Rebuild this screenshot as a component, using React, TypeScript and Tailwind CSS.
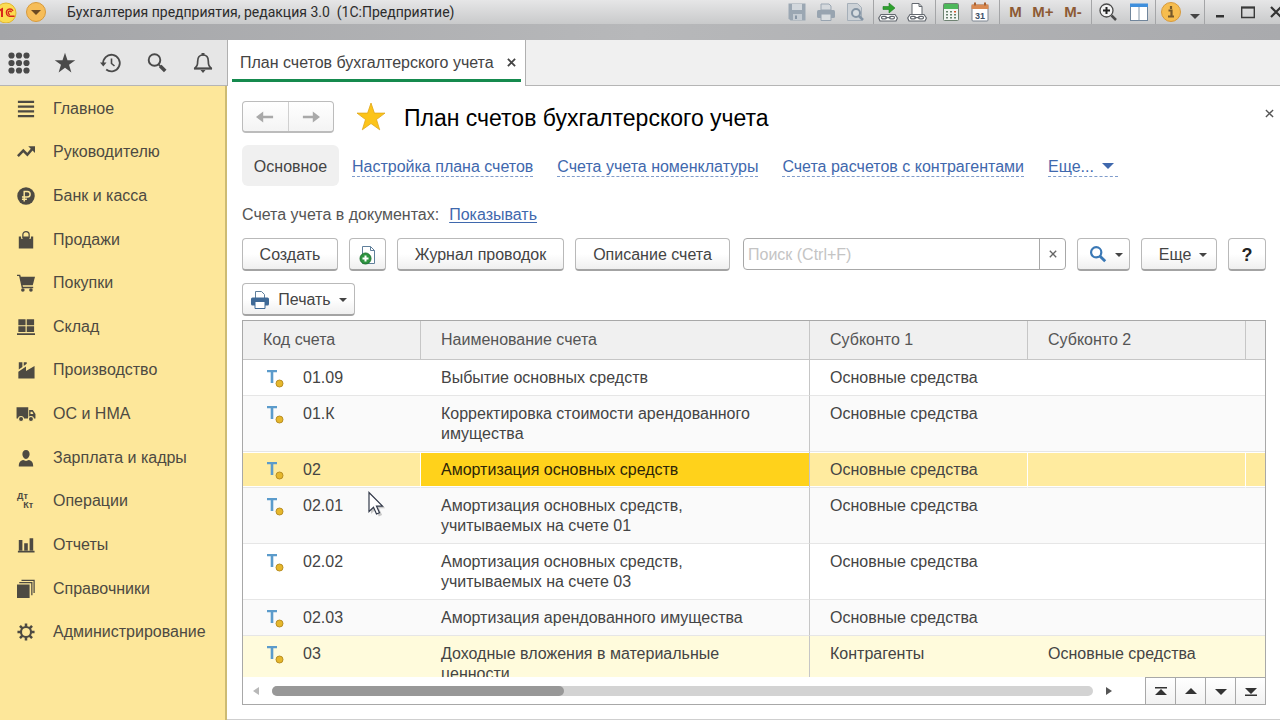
import React from "react";
import clsx from "clsx";

interface SvgProps {
  size?: number;
  box?: number;
  className?: string;
  children: React.ReactNode;
}

const Svg: React.FC<SvgProps> = ({ size = 20, box = 20, className, children }) => (
  <svg
    width={size}
    height={size}
    viewBox={`0 0 ${box} ${box}`}
    fill="none"
    aria-hidden="true"
    className={clsx("shrink-0 overflow-visible", className)}
  >
    {children}
  </svg>
);

const CaretDown = () => (
  <svg width="8" height="4" viewBox="0 0 8 4" fill="currentColor" aria-hidden="true" className="shrink-0">
    <path d="M0 0h8L4 4z" />
  </svg>
);

const starPath = "M15 1l3.4 10.1H29l-8.500 6.400 3.200 10.300L15 21.500l-8.700 6.300 3.200-10.300L1 11.100h10.600z";

/* ---------- Window title bar ---------- */

interface TitleGroupProps {
  className: string;
  children: React.ReactNode;
}

const TitleGroup: React.FC<TitleGroupProps> = ({ className, children }) => (
  <div className={clsx("flex h-6 shrink-0 items-center justify-around", className)}>{children}</div>
);

const separator = "border-l border-[#a4a5a7]";

const ToolButton: React.FC<{ label: string; children: React.ReactNode }> = ({ label, children }) => (
  <button type="button" aria-label={label} className="flex h-6 items-center justify-center">
    {children}
  </button>
);

const MemoryButton: React.FC<{ text: string }> = ({ text }) => (
  <button type="button" className="text-[15px] leading-6 font-bold text-[#8d5a34]">
    {text}
  </button>
);

const ChainLinks = () => (
  <g stroke="#63686f" strokeWidth="1.200" fill="#fff">
    <path d="M3 12.500h14l2.400 3.500-1.400 3H2L.7 16z" />
    <rect x="3.500" y="14.300" width="5" height="2.600" rx="1.300" />
    <rect x="11.500" y="14.300" width="5" height="2.600" rx="1.300" />
    <path d="M7.500 15.600h5" />
  </g>
);

const TitleBar = () => (
  <header className="h-10 overflow-hidden bg-linear-to-r from-[#a4a5a8] via-[#b7b8ba] to-[#a9aaad]">
    <div className="flex h-6 items-center bg-linear-to-b from-[#e6e6e7] to-[#c9cacb]">
      <svg width="17" height="22" viewBox="0 0 17 22" aria-hidden="true" className="shrink-0">
        <circle cx="6" cy="12" r="10" fill="#fbdc52" stroke="#e3b62f" />
        <path d="M0 9.500l2-1.200V16" stroke="#d8261c" strokeWidth="2" fill="none" />
        <path d="M13 9.800a3.600 3.600 0 1 0-3.400 5.400h5M11.500 11.200a1.700 1.700 0 1 0-1.600 2.300" stroke="#d8261c" strokeWidth="1.400" fill="none" />
      </svg>
      <button type="button" aria-label="Главное меню" className="ml-2 shrink-0">
        <svg width="22" height="22" viewBox="0 0 22 22" aria-hidden="true">
          <circle cx="11" cy="11" r="9.500" fill="#f6bd59" stroke="#d79a3c" />
          <path d="M6 9h10l-5 5z" fill="#6b4a22" />
        </svg>
      </button>
      <h1 className="ml-5 flex-1 truncate font-[Roboto,Arial,sans-serif] text-[14px] leading-6 text-[#2c2c2c]">
        Бухгалтерия предприятия, редакция 3.0&nbsp; (1С:Предприятие)
      </h1>

      <TitleGroup className="w-[90px] pr-1">
        <ToolButton label="Сохранить">
          <Svg>
            <path d="M1.500 1.500h17v17h-15l-2-2z" fill="#9ba7b3" />
            <path d="M5 2h10v6H5z" fill="#d3d8dd" />
            <path d="M6 12h9v6H6z" fill="#c5ccd3" />
            <path d="M8 13.500h2v3.500H8z" fill="#8896a5" />
          </Svg>
        </ToolButton>
        <ToolButton label="Печать">
          <Svg>
            <path d="M5 2h8l2 2v4H5z" fill="#d5d9dd" stroke="#9ba7b3" />
            <rect x="1" y="8" width="18" height="8" rx="1.500" fill="#98a4b0" />
            <path d="M5 12h10v6.500H5z" fill="#d9dde0" stroke="#98a4b0" />
          </Svg>
        </ToolButton>
        <ToolButton label="Предварительный просмотр">
          <Svg>
            <path d="M2.500 1.500h10l4 4v13h-14z" fill="#cdd2d7" stroke="#a5afb9" />
            <circle cx="11" cy="11" r="4" stroke="#8494a4" strokeWidth="2" fill="#d8dde1" />
            <path d="M14 14l4 4" stroke="#8494a4" strokeWidth="2.500" />
          </Svg>
        </ToolButton>
      </TitleGroup>

      <TitleGroup className={clsx("w-[62px] pr-1", separator)}>
        <ToolButton label="Получить ссылку">
          <Svg>
            <ChainLinks />
            <path d="M5 4.500h6V1l6 5-6 5V7.500H5z" fill="#2ea12e" stroke="#1d7c22" strokeWidth=".6" />
          </Svg>
        </ToolButton>
        <ToolButton label="Перейти по ссылке">
          <Svg>
            <path d="M5 13V1.500h7l3 3V13z" fill="#fff" stroke="#63686f" />
            <path d="M12 1.500v3h3" stroke="#63686f" />
            <ChainLinks />
          </Svg>
        </ToolButton>
      </TitleGroup>

      <TitleGroup className={clsx("w-[64px] pr-1", separator)}>
        <ToolButton label="Калькулятор">
          <Svg>
            <rect x="2.500" y="1.500" width="15" height="17" rx="1" fill="#f2f5f2" stroke="#6f8272" />
            <path d="M3 2h14v5H3z" fill="#4db85a" />
            <g fill="#67806c">
              <path d="M5 9h2v1.500H5zM9 9h2v1.500H9zM5 12h2v1.500H5zM9 12h2v1.500H9zM5 15h2v1.500H5zM9 15h2v1.500H9zM13 12h2v1.500h-2zM13 15h2v1.500h-2z" />
            </g>
            <path d="M13 9h2v1.500h-2z" fill="#d8542e" />
          </Svg>
        </ToolButton>
        <ToolButton label="Календарь">
          <Svg>
            <rect x="2" y="3" width="16" height="16" rx="1" fill="#fff" stroke="#7c8590" />
            <path d="M1.500 2.500h17V7h-17z" fill="#d98a52" />
            <path d="M5 .5v3M15 .5v3" stroke="#a9602f" strokeWidth="2" />
            <text x="10" y="16.500" textAnchor="middle" fontSize="9" fontWeight="bold" fill="#3d5168">
              31
            </text>
          </Svg>
        </ToolButton>
      </TitleGroup>

      <TitleGroup className={clsx("w-[92px] px-1", separator)}>
        <MemoryButton text="M" />
        <MemoryButton text="M+" />
        <MemoryButton text="M-" />
      </TitleGroup>

      <TitleGroup className={clsx("w-[64px]", separator)}>
        <ToolButton label="Масштаб">
          <Svg>
            <circle cx="8.500" cy="8.500" r="6.500" fill="#f3f3f3" stroke="#4b4b4b" strokeWidth="1.300" />
            <path d="M8.500 5v7M5 8.500h7" stroke="#222" strokeWidth="2" />
            <path d="M13.500 13.500l4.500 4.500" stroke="#4b4b4b" strokeWidth="2.500" />
          </Svg>
        </ToolButton>
        <ToolButton label="Панели">
          <Svg>
            <rect x="1.500" y="2.500" width="17" height="16" fill="#fff" stroke="#70859b" />
            <path d="M1 1.500h18V5H1z" fill="#3f8fdc" />
            <path d="M10 5v13.500" stroke="#8496a8" />
          </Svg>
        </ToolButton>
      </TitleGroup>

      <TitleGroup className={clsx("w-[49px]", separator)}>
        <ToolButton label="Информация">
          <Svg size={22} box={22}>
            <circle cx="11" cy="11" r="9.500" fill="#f6bd4f" stroke="#d79a3c" />
            <path d="M11 5v3M8.500 9.500h3V15M8 15.500h6" stroke="#76592b" strokeWidth="2.200" />
          </Svg>
        </ToolButton>
        <button type="button" aria-label="Ещё" className="mt-2 text-[#444]">
          <svg width="10" height="5" viewBox="0 0 10 5" fill="currentColor" aria-hidden="true">
            <path d="M0 0h10L5 5z" />
          </svg>
        </button>
      </TitleGroup>

      <div className={clsx("flex h-6 w-[76px] shrink-0 items-center justify-between pl-[10px]", separator)}>
        <ToolButton label="Свернуть">
          <svg width="10" height="14" viewBox="0 0 10 14" aria-hidden="true">
            <path d="M1 10h8v2.500H1z" fill="#333" />
          </svg>
        </ToolButton>
        <ToolButton label="Развернуть">
          <svg width="14" height="14" viewBox="0 0 14 14" fill="none" aria-hidden="true">
            <path d="M.7 2.500h12.600v10H.7z" stroke="#3a3a3a" strokeWidth="1.400" />
            <path d="M0 2.500h14" stroke="#3a3a3a" strokeWidth="2" />
          </svg>
        </ToolButton>
        <ToolButton label="Закрыть">
          <svg width="10" height="12" viewBox="0 0 10 12" fill="none" aria-hidden="true">
            <path d="M1 1l10 10M11 1L1 11" stroke="#333" strokeWidth="2.200" />
          </svg>
        </ToolButton>
      </div>
    </div>
  </header>
);

/* ---------- Toolbar with the open tab ---------- */

const TabBar = () => (
  <div className="flex h-[46px] items-stretch border-b border-[#b5b5b5] bg-[#f0f0f0]">
    <div className="flex w-[227px] shrink-0 items-center gap-6 bg-[#e6e6e6] pl-2 text-[#4a4a4a]">
      <button type="button" aria-label="Меню функций">
        <Svg size={22} box={22}>
          {[3.5, 11, 18.5].map((y) =>
            [3.5, 11, 18.5].map((x) => <circle key={`${x}-${y}`} cx={x} cy={y} r="3.100" fill="currentColor" />),
          )}
        </Svg>
      </button>
      <button type="button" aria-label="Избранное">
        <Svg size={22} box={30}>
          <path d={starPath} fill="currentColor" />
        </Svg>
      </button>
      <button type="button" aria-label="История">
        <Svg size={22} box={22}>
          <path d="M3.200 12a8.300 8.300 0 1 1 3 5.500" stroke="currentColor" strokeWidth="1.800" />
          <path d="M0 10.500h6.500L3.300 14.500z" fill="currentColor" />
          <path d="M11.500 6.500v5l3 2.500" stroke="currentColor" strokeWidth="1.600" />
        </Svg>
      </button>
      <button type="button" aria-label="Поиск">
        <Svg size={22} box={22}>
          <circle cx="8.500" cy="8" r="5.800" stroke="currentColor" strokeWidth="1.900" />
          <path d="M12.500 12.300l2 2" stroke="currentColor" strokeWidth="1.700" />
          <path d="M14.200 14l5 5" stroke="currentColor" strokeWidth="3.600" />
        </Svg>
      </button>
      <button type="button" aria-label="Уведомления">
        <Svg size={22} box={22}>
          <path
            d="M11 3c-3.800 0-5.300 2.600-5.300 6 0 4.500-1 5.500-3 7.500h16.600c-2-2-3-3-3-7.500 0-3.400-1.500-6-5.300-6z"
            stroke="currentColor"
            strokeWidth="1.700"
            strokeLinejoin="round"
          />
          <path d="M9.500 1h3v2.500h-3zM2 15.500h18v2H2zM8.500 18h5l-2.500 3z" fill="currentColor" />
        </Svg>
      </button>
    </div>
    <div className="-mb-px flex w-[299px] shrink-0 flex-col border-x border-[#b0b0b0] bg-white px-1 pb-1">
      <div className="flex flex-1 items-center justify-between border-b-3 border-[#158a4e] pt-1.5 pr-1 pl-2">
        <a href="#accounts" className="text-[16px] leading-5 whitespace-nowrap text-[#444]">
          План счетов бухгалтерского учета
        </a>
        <button type="button" aria-label="Закрыть вкладку" className="px-px text-[#444]">
          <Svg size={9} box={10}>
            <path d="M1 1l8 8M9 1L1 9" stroke="currentColor" strokeWidth="2" />
          </Svg>
        </button>
      </div>
    </div>
  </div>
);

/* ---------- Sections panel ---------- */

const sections: { title: string; icon: React.ReactNode }[] = [
  {
    title: "Главное",
    icon: <path d="M1 2h18M1 7.300h18M1 12.700h18M1 18h18" stroke="currentColor" strokeWidth="2.400" />,
  },
  {
    title: "Руководителю",
    icon: (
      <>
        <path d="M1 14.500l6-6 4.500 4.500 6-7" stroke="currentColor" strokeWidth="2.800" />
        <path d="M12.500 3.500H20V11z" fill="currentColor" />
      </>
    ),
  },
  {
    title: "Банк и касса",
    icon: (
      <>
        <circle cx="10" cy="10" r="9.700" fill="currentColor" />
        <path d="M8 16V5h3.500a3 3 0 0 1 0 6.200H5.500M5.500 13.700H11" stroke="#fde79a" strokeWidth="1.600" />
      </>
    ),
  },
  {
    title: "Продажи",
    icon: (
      <>
        <path d="M2 6h2.500v2.500h2V6h7v2.500h2V6H18v13.500H2z" fill="currentColor" />
        <path d="M6.500 8V4.200a3.500 3.500 0 0 1 7 0V8" stroke="currentColor" strokeWidth="1.400" />
      </>
    ),
  },
  {
    title: "Покупки",
    icon: (
      <>
        <path d="M3.500 3H20l-2.500 9.500H5.500z" fill="currentColor" />
        <path d="M0 1.500h3l3 13.500h12" stroke="currentColor" strokeWidth="1.600" />
        <circle cx="6.500" cy="17.700" r="2" fill="currentColor" />
        <circle cx="15.500" cy="17.700" r="2" fill="currentColor" />
      </>
    ),
  },
  {
    title: "Склад",
    icon: <path d="M1.500 1.500H9.500v6.500H1.500zM10.800 1.500h8.200v6.500h-8.200zM1.500 9.200H9.500v6.300H1.500zM10.800 9.200h8.200v6.300h-8.200zM0 17h20v2H0z" fill="currentColor" />,
  },
  {
    title: "Производство",
    icon: <path d="M1.500 19.500V12l8.500-6v5l9.500-5.500v14zM2 1.500h4v5.200L2 9.500zM7.500 1.500h3.300v1.500L7.500 5.500z" fill="currentColor" />,
  },
  {
    title: "ОС и НМА",
    icon: (
      <>
        <path d="M-.5 2.500h13v12.500h-13zM13.500 5.500h4l3 4.500v5h-7z" fill="currentColor" />
        <path d="M15 7.500h2l1.300 2.500H15z" fill="#fde79a" />
        <circle cx="4.500" cy="15.500" r="2.800" fill="currentColor" stroke="#fde79a" strokeWidth="1.200" />
        <circle cx="15.500" cy="15.500" r="2.800" fill="currentColor" stroke="#fde79a" strokeWidth="1.200" />
      </>
    ),
  },
  {
    title: "Зарплата и кадры",
    icon: <path d="M10 1c2.600 0 4 2 4 4.600S12.300 11 10 11 6 8.200 6 5.600 7.400 1 10 1zM2 19.500c0-4.500 1.500-6.500 5-7.200 1.800 1.200 4.200 1.200 6 0 3.500.7 5 2.700 5 7.200z" fill="currentColor" />,
  },
  {
    title: "Операции",
    icon: (
      <g fill="currentColor" fontSize="10" fontWeight="bold">
        <text x="0" y="8">Дт</text>
        <text x="7" y="18">Кт</text>
      </g>
    ),
  },
  {
    title: "Отчеты",
    icon: <path d="M2 4.500h4V16H2zM8 8h4v8H8zM14 2.500h4V16h-4zM1 16.500h18.500v1.800H1z" fill="currentColor" />,
  },
  {
    title: "Справочники",
    icon: (
      <>
        <path d="M0 5h14v15H0z" fill="currentColor" />
        <path d="M2.500 2.800h14V17M5 .3h14v14.200" stroke="currentColor" strokeWidth="1.400" />
      </>
    ),
  },
  {
    title: "Администрирование",
    icon: (
      <>
        <circle cx="10" cy="10" r="5.600" stroke="currentColor" strokeWidth="2.400" />
        <path
          d="M10 .5v4M10 15.500v4M.5 10h4M15.500 10h4M3.300 3.300l2.800 2.800M13.900 13.900l2.800 2.800M3.300 16.700l2.800-2.800M13.900 6.100l2.800-2.800"
          stroke="currentColor"
          strokeWidth="2.800"
        />
      </>
    ),
  },
];

const Sidebar = () => (
  <nav aria-label="Разделы" className="w-[227px] shrink-0 border-r-2 border-[#cdbb73] bg-[#fde79a]">
    <ul className="mt-px flex h-[567px] flex-col">
      {sections.map(({ title, icon }) => (
        <li key={title} className="flex-1">
          <a href="#section" className="flex h-full items-center gap-[18px] pl-[17px] text-[#4d4a42]">
            <Svg size={18}>{icon}</Svg>
            <span className="text-[16px] leading-5">{title}</span>
          </a>
        </li>
      ))}
    </ul>
  </nav>
);

/* ---------- Form commands ---------- */

interface CommandButtonProps {
  className?: string;
  label?: string;
  children: React.ReactNode;
}

const CommandButton: React.FC<CommandButtonProps> = ({ className, label, children }) => (
  <button
    type="button"
    aria-label={label}
    className={clsx(
      "flex h-[33px] shrink-0 items-center justify-center rounded-sm border border-b-2 border-[#b9b9b9] border-b-[#a3a3a3] bg-linear-to-b from-white from-50% to-[#efefef] pt-0.5 text-[16px] leading-5 whitespace-nowrap text-[#444]",
      className,
    )}
  >
    {children}
  </button>
);

const PageHeader = () => (
  <div className="flex h-8 items-center">
    <div className="flex h-8 w-[92px] shrink-0 rounded-sm border border-b-2 border-[#bcbcbc] bg-linear-to-b from-white to-[#f4f4f4] text-[#a9a9a9]">
      <button type="button" aria-label="Назад" className="flex flex-1 items-center justify-center border-r border-[#d0d0d0]">
        <Svg size={18}>
          <path d="M0 10l8-6v4.500h11v3H8V16z" fill="currentColor" />
        </Svg>
      </button>
      <button type="button" aria-label="Вперед" className="flex flex-1 items-center justify-center">
        <Svg size={18}>
          <path d="M20 10l-8-6v4.500H1v3h11V16z" fill="currentColor" />
        </Svg>
      </button>
    </div>
    <button type="button" aria-label="В избранное" className="ml-[22px] shrink-0">
      <Svg size={30} box={30}>
        <path d={starPath} fill="#fcc419" stroke="#e0a71b" strokeWidth=".8" />
      </Svg>
    </button>
    <h2 className="ml-[18px] flex-1 pt-0.5 text-[23px] leading-8 text-black">План счетов бухгалтерского учета</h2>
    <button type="button" aria-label="Закрыть форму" className="-mt-2 -mr-2 text-[#555]">
      <Svg size={9} box={10}>
        <path d="M1 1l8 8M9 1L1 9" stroke="currentColor" strokeWidth="1.500" />
      </Svg>
    </button>
  </div>
);

const formLinks = ["Настройка плана счетов", "Счета учета номенклатуры", "Счета расчетов с контрагентами"];

const FormNav = () => (
  <nav aria-label="Навигация формы" className="mt-3 flex h-[41px] items-center text-[16px] leading-5 whitespace-nowrap">
    <a href="#main" className="flex h-full w-[97px] items-center justify-center rounded-md bg-[#f0f0f0] pt-0.5 text-[#444]">
      Основное
    </a>
    <div className="ml-[13px] flex gap-6 pt-0.5 text-[#3f68ad]">
      {formLinks.map((text) => (
        <a key={text} href="#list" className="h-5 border-b border-dashed border-[#7f9ccb]">
          {text}
        </a>
      ))}
      <button type="button" className="flex h-5 items-start gap-2 border-b border-dashed border-[#7f9ccb] pr-1">
        Еще...
        <svg width="12" height="20" viewBox="0 0 12 20" fill="currentColor" aria-hidden="true">
          <path d="M0 6h12L6 12z" />
        </svg>
      </button>
    </div>
  </nav>
);

const CommandBar = () => (
  <div className="mt-[13px] flex gap-[11px]">
    <CommandButton className="w-24">Создать</CommandButton>
    <CommandButton className="w-[37px]" label="Добавить из плана">
      <Svg>
        <path d="M4.500 1.500h8l4 4v13h-12z" fill="#fff" stroke="#5f7f9b" />
        <path d="M12.500 1.500v4h4" stroke="#5f7f9b" />
        <circle cx="7.500" cy="13.500" r="5.500" fill="#2e9440" stroke="#1d7430" />
        <path d="M7.500 10.500v6M4.500 13.500h6" stroke="#fff" strokeWidth="2" />
      </Svg>
    </CommandButton>
    <CommandButton className="w-[167px]">Журнал проводок</CommandButton>
    <CommandButton className="w-[155px]">Описание счета</CommandButton>
    <div className="ml-0.5 flex h-8 min-w-0 flex-1 overflow-hidden rounded-sm border border-[#a8a8a8] bg-white">
      <input
        type="text"
        aria-label="Поиск"
        placeholder="Поиск (Ctrl+F)"
        className="min-w-0 flex-1 px-1 pt-0.5 text-[16px] leading-5 text-[#444] outline-none placeholder:text-[#c4c4c4]"
      />
      <button
        type="button"
        aria-label="Очистить"
        className="flex w-[26px] items-center justify-center border-l border-[#a8a8a8] text-[#666]"
      >
        <Svg size={8} box={10}>
          <path d="M1 1l8 8M9 1L1 9" stroke="currentColor" strokeWidth="1.700" />
        </Svg>
      </button>
    </div>
    <CommandButton className="w-[53px] gap-2 pl-1" label="Найти">
      <Svg size={18} className="text-[#3a78b5]">
        <circle cx="8" cy="7" r="5.700" stroke="currentColor" strokeWidth="2.400" />
        <path d="M12 11l6 6" stroke="currentColor" strokeWidth="3.200" />
      </Svg>
      <CaretDown />
    </CommandButton>
    <CommandButton className="w-[76px] gap-2 pl-2">
      Еще
      <CaretDown />
    </CommandButton>
    <CommandButton className="w-[38px]">
      <span className="text-[18px] font-bold text-[#222]">?</span>
    </CommandButton>
  </div>
);

/* ---------- Accounts table ---------- */

interface Account {
  code: string;
  name: string;
  sub1: string;
  sub2?: string;
  selected?: boolean;
  group?: boolean;
}

const accounts: Account[] = [
  { code: "01.09", name: "Выбытие основных средств", sub1: "Основные средства" },
  { code: "01.К", name: "Корректировка стоимости арендованного имущества", sub1: "Основные средства" },
  { code: "02", name: "Амортизация основных средств", sub1: "Основные средства", selected: true },
  { code: "02.01", name: "Амортизация основных средств, учитываемых на счете 01", sub1: "Основные средства" },
  { code: "02.02", name: "Амортизация основных средств, учитываемых на счете 03", sub1: "Основные средства" },
  { code: "02.03", name: "Амортизация арендованного имущества", sub1: "Основные средства" },
  {
    code: "03",
    name: "Доходные вложения в материальные ценности",
    sub1: "Контрагенты",
    sub2: "Основные средства",
    group: true,
  },
];

const AccountIcon = () => (
  <Svg size={18} box={18}>
    <path d="M0 1h10v2.200H6.300V14H3.700V3.200H0z" fill="#5b9bcb" />
    <circle cx="12.500" cy="14.500" r="3.500" fill="#e6b72c" stroke="#b98e22" />
  </Svg>
);

const headCell = "h-[39px] border-b border-[#c6c6c6] pl-5 text-left font-normal text-[#555]";

const AccountRow: React.FC<{ account: Account; striped: boolean }> = ({ account, striped }) => {
  const { code, name, sub1, sub2, selected, group } = account;
  const cell = clsx(
    "border-b border-[#e6e6e6] pt-2 pb-[7px] pl-5",
    selected && "shadow-[inset_0_1px_#fff,inset_0_-1px_#fff]",
  );
  const divider = selected ? "border-r border-r-white" : "";

  return (
    <tr
      className={clsx(
        "align-top text-[#444]",
        selected && "bg-[#ffeb9f]",
        group && "bg-[#fffbdc]",
        !selected && !group && (striped ? "bg-[#fafafa]" : "bg-white"),
      )}
    >
      <td className={clsx(cell, divider)}>
        <div className="flex items-center gap-[18px] pl-1">
          <AccountIcon />
          {code}
        </div>
      </td>
      <td className={clsx(cell, "border-r border-r-[#c6c6c6] pr-8", selected && "bg-[#ffd21b] text-[#2d2508]")}>
        {name}
      </td>
      <td className={clsx(cell, divider)}>{sub1}</td>
      <td className={clsx(cell, divider)}>{sub2}</td>
      <td className={cell} />
    </tr>
  );
};

const scrollSteps = [
  { label: "В начало", path: "M0 0h12v1.500H0zM6 2l6 6H0z" },
  { label: "Вверх", path: "M6 1l6 6H0z" },
  { label: "Вниз", path: "M6 8l6-6H0z" },
  { label: "В конец", path: "M6 7l6-6H0zM0 7.500h12V9H0z" },
];

const AccountsTable = () => (
  <section className="mt-1 flex min-h-0 flex-1 flex-col border border-[#a8a8a8] bg-white">
    <div className="min-h-0 flex-1 overflow-hidden">
      <table className="w-full table-fixed border-separate border-spacing-0 text-[16px] leading-5">
        <colgroup>
          <col className="w-[178px]" />
          <col />
          <col className="w-[218px]" />
          <col className="w-[218px]" />
          <col className="w-[19px]" />
        </colgroup>
        <thead className="bg-[#f0f0f0]">
          <tr>
            <th scope="col" className={clsx(headCell, "border-r")}>Код счета</th>
            <th scope="col" className={clsx(headCell, "border-r")}>Наименование счета</th>
            <th scope="col" className={clsx(headCell, "border-r")}>Субконто 1</th>
            <th scope="col" className={clsx(headCell, "border-r")}>Субконто 2</th>
            <td className="border-b border-[#c6c6c6]" />
          </tr>
        </thead>
        <tbody>
          {accounts.map((account, index) => (
            <AccountRow key={account.code} account={account} striped={index % 2 === 1} />
          ))}
        </tbody>
      </table>
    </div>
    <div className="flex h-[27px] shrink-0 items-center pl-[10px]">
      <button type="button" aria-label="Влево" className="text-[#b8b8b8]">
        <svg width="6" height="8" viewBox="0 0 6 8" fill="currentColor" aria-hidden="true">
          <path d="M6 0v8L0 4z" />
        </svg>
      </button>
      <div className="mx-[13px] h-[10px] flex-1 rounded-full bg-[#d3d3d3]">
        <div className="h-[10px] w-[292px] rounded-full bg-[#989898]" />
      </div>
      <button type="button" aria-label="Вправо" className="text-[#555]">
        <svg width="6" height="8" viewBox="0 0 6 8" fill="currentColor" aria-hidden="true">
          <path d="M0 0v8l6-4z" />
        </svg>
      </button>
      <div className="ml-[33px] flex h-full border-t border-[#a8a8a8]">
        {scrollSteps.map(({ label, path }) => (
          <button
            key={label}
            type="button"
            aria-label={label}
            className="flex w-[30px] items-center justify-center border-l border-[#a8a8a8] bg-linear-to-b from-white to-[#f2f2f2] text-[#333]"
          >
            <svg width="12" height="9" viewBox="0 0 12 9" fill="currentColor" aria-hidden="true">
              <path d={path} />
            </svg>
          </button>
        ))}
      </div>
    </div>
  </section>
);

const MousePointer = () => (
  <svg width="20" height="28" viewBox="0 0 20 28" aria-hidden="true" className="pointer-events-none absolute top-[491px] left-[367px]">
    <path d="M4 3v20l4.600-4.400 3.200 7 3.300-1.500-3.100-6.900h6.200z" fill="#000" opacity=".2" />
    <path d="M2 1.500v19l4.500-4.200 3 6.700 3-1.300-3-6.500h6z" fill="#fff" stroke="#333a4a" strokeWidth="1.200" />
  </svg>
);

const App = () => (
  <div className="relative flex h-screen flex-col overflow-hidden bg-white font-['Liberation_Sans',Arial,sans-serif]">
    <TitleBar />
    <TabBar />
    <div className="flex min-h-0 flex-1">
      <Sidebar />
      <main className="flex min-w-0 flex-1 flex-col border-b border-[#cfcfcf] pt-[15px] pr-[14px] pb-[14px] pl-[15px]">
        <PageHeader />
        <FormNav />
        <p className="mt-[19px] flex gap-[10px] text-[16px] leading-5 text-[#555]">
          Счета учета в документах:
          <a href="#show" className="text-[#3f68ad] underline underline-offset-2">
            Показывать
          </a>
        </p>
        <CommandBar />
        <div className="mt-3 flex">
          <CommandButton className="w-[113px] gap-2">
            <Svg>
              <path d="M5.500 8V1.500h6l3 3V8" fill="#fff" stroke="#5f7f9b" />
              <rect x="1" y="7.500" width="18" height="8" rx="1.500" fill="#3f6a97" />
              <path d="M5 11.500h10v7H5z" fill="#fff" stroke="#3f6a97" />
            </Svg>
            Печать
            <CaretDown />
          </CommandButton>
        </div>
        <AccountsTable />
      </main>
    </div>
    <MousePointer />
  </div>
);

export default App;
